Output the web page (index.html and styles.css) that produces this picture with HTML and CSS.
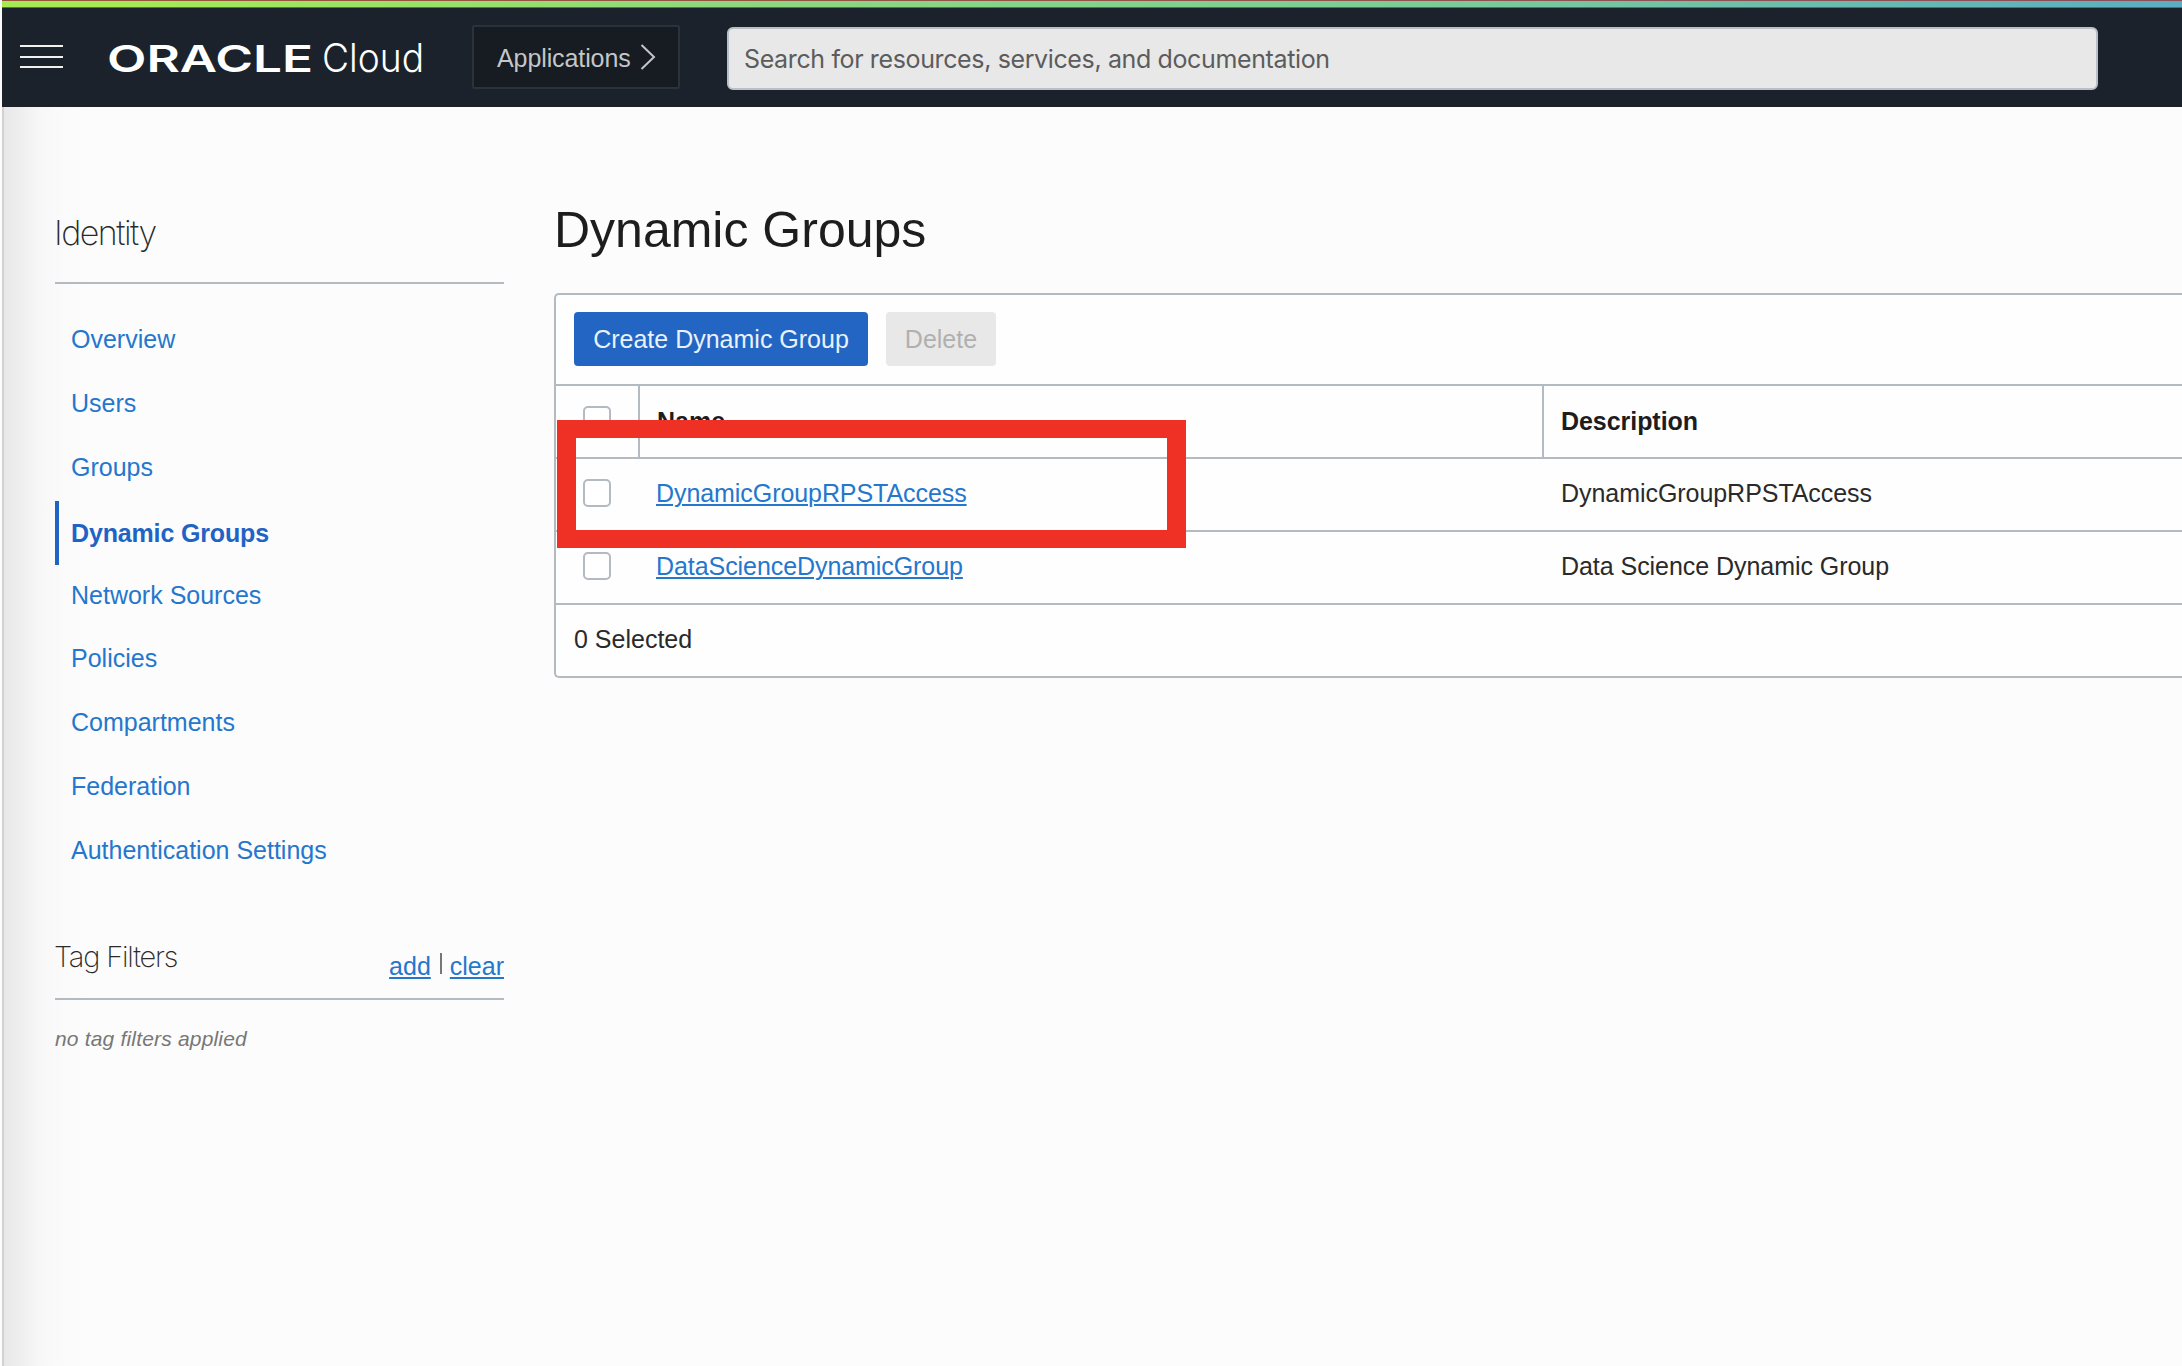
FILE: index.html
```html
<!DOCTYPE html>
<html lang="en">
<head>
<meta charset="utf-8">
<title>Dynamic Groups</title>
<link rel="stylesheet" href="styles.css">
</head>
<body>
<div class="page">
  <header class="topbar">
    <button class="menu" aria-label="Menu"><span></span><span></span><span></span></button>
    <svg class="logo" width="330" height="56" viewBox="0 0 330 56">
      <text class="logo-brand" x="0" y="38" textLength="206" lengthAdjust="spacingAndGlyphs">ORACLE</text>
      <text class="logo-cloud" x="215" y="38" textLength="102" lengthAdjust="spacingAndGlyphs">Cloud</text>
    </svg>
    <button class="apps"><span>Applications</span>
      <svg width="16" height="26" viewBox="0 0 16 26"><path d="M1.5 1 L14 13 L1.5 25" fill="none" stroke="#c4c6c8" stroke-width="2"/></svg>
    </button>
    <div class="search"><span>Search for resources, services, and documentation</span></div>
  </header>
  <div class="body">
    <aside class="sidebar">
      <h2 class="side-title">Identity</h2>
      <nav class="nav">
        <a>Overview</a>
        <a>Users</a>
        <a>Groups</a>
        <a class="active"><span>Dynamic Groups</span></a>
        <a>Network Sources</a>
        <a>Policies</a>
        <a>Compartments</a>
        <a>Federation</a>
        <a>Authentication Settings</a>
      </nav>
      <div class="filters">
        <h3>Tag Filters</h3>
        <div class="filter-links"><a>add</a><i></i><a>clear</a></div>
      </div>
      <p class="empty">no tag filters applied</p>
    </aside>
    <main class="main">
      <h1><span>Dynamic Groups</span></h1>
      <section class="panel">
        <div class="actions">
          <button class="btn primary">Create Dynamic Group</button>
          <button class="btn disabled">Delete</button>
        </div>
        <div class="row head">
          <div class="check"><span class="box"></span></div>
          <div class="name">Name</div>
          <div class="desc">Description</div>
        </div>
        <div class="row">
          <div class="check"><span class="box"></span></div>
          <div class="name"><a>DynamicGroupRPSTAccess</a></div>
          <div class="desc">DynamicGroupRPSTAccess</div>
        </div>
        <div class="row">
          <div class="check"><span class="box"></span></div>
          <div class="name"><a>DataScienceDynamicGroup</a></div>
          <div class="desc">Data Science Dynamic Group</div>
        </div>
        <div class="foot">0 Selected</div>
        <div class="highlight"></div>
      </section>
    </main>
  </div>
</div>
</body>
</html>
```

FILE: styles.css
```css
* { box-sizing: border-box; }
body {
  margin: 0;
  background: #fcfcfc;
  font-family: "Liberation Sans", Arial, sans-serif;
  font-size: 25px;
  color: #2a2a2a;
}
h1, h2, h3, p { margin: 0; font-weight: 400; }
button { font: inherit; border: 0; padding: 0; background: none; }

.page {
  height: 1366px;
  overflow: hidden;
  padding-left: 2px;
  display: flex;
  flex-direction: column;
}

.topbar {
  flex: none;
  height: 107px;
  background:
    linear-gradient(90deg, #96553a, #8a4f58) 0 0 / 100% 1px no-repeat,
    linear-gradient(90deg, #a3ea55 0%, #a3ea55 6%, #8ed97c 32%, #79cc98 66%, #5badc2 100%) 0 1px / 100% 6px no-repeat,
    linear-gradient(#4f7a45, #4f7a45) 0 7px / 100% 1px no-repeat,
    #1b222b;
  display: flex;
  align-items: flex-start;
}
.menu {
  width: 43px;
  margin: 45px 0 0 18px;
  display: flex;
  flex-direction: column;
  gap: 8.7px;
}
.menu span { height: 2px; background: #f0f0ec; }
.logo { margin: 34px 0 0 44px; width: 330px; height: 56px; flex: none; }
.logo-brand { font: 600 37px Inter, sans-serif; fill: #fff; }
.logo-cloud { font: 300 39px Inter, sans-serif; fill: #fff; }
.apps {
  flex: none;
  width: 208px;
  height: 64px;
  margin: 25px 0 0 35px;
  border: 2px solid #2b323a;
  border-radius: 2px;
  background: #161c22;
  color: #c4c6c8;
  display: flex;
  align-items: center;
  padding-left: 23px;
}
.apps span { width: 143px; text-align: left; letter-spacing: -0.1px; padding-top: 2px; }
.search {
  flex: none;
  width: 1371px;
  height: 63px;
  margin: 27px 0 0 47px;
  border: 2px solid #b7c0c7;
  border-radius: 6px;
  background: #e8e8e8;
  color: #5c5c5c;
  font: 25px/61px Inter, sans-serif;
  letter-spacing: -0.37px;
  padding-left: 15px;
}

.body {
  flex: 1;
  display: flex;
  border-left: 2px solid #d2d2d2;
  background: linear-gradient(90deg, #e8e8e8 0, #efefef 18px, #f7f7f7 36px, #fafafa 54px, #fcfcfc 82px);
}
.sidebar { width: 449px; margin-left: 51px; flex: none; }
.side-title {
  height: 177px;
  padding-top: 106px;
  border-bottom: 2px solid #b3bac1;
  font: 200 34px/40px Inter, sans-serif;
  letter-spacing: -1.5px;
  text-indent: -1px;
}
.nav { padding-top: 23px; display: flex; flex-direction: column; }
.nav a {
  height: 63.9px;
  line-height: 64px;
  padding-left: 16px;
  color: #2477cd;
}
.nav .active {
  margin: 2px 0 -2px;
  padding-left: 12px;
  border-left: 4px solid #1f63c4;
  font-weight: 700;
  letter-spacing: -0.15px;
  color: #1f63c4;
}
.filters {
  height: 117.5px;
  border-bottom: 2px solid #b3bac1;
  display: flex;
  justify-content: space-between;
}
.filters h3 {
  padding-top: 55px;
  font: 200 29px/40px Inter, sans-serif;
  letter-spacing: -1.2px;
  text-indent: -1px;
}
.filter-links { display: flex; padding-top: 69px; line-height: 30px; }
.filter-links i { width: 2px; height: 21px; background: #777; margin: 2px 8px 0 9px; }
.filter-links a, .name a {
  color: #2477cd;
  text-decoration: underline;
  text-decoration-thickness: 2px;
  text-underline-offset: 2px;
}
.empty {
  padding-top: 26px;
  font-size: 21px;
  line-height: 26px;
  font-style: italic;
  letter-spacing: 0.18px;
  color: #777;
}

.main { margin-left: 50px; flex: 1; min-width: 0; }
h1 { height: 186px; padding-top: 93px; font-size: 50px; line-height: 60px; color: #1d1d1d; }
.panel {
  position: relative;
  border: 2px solid #b3bac1;
  border-right: 0;
  border-radius: 5px 0 0 5px;
  background: #fefefe;
}
.actions {
  height: 91px;
  padding: 17px 0 0 18px;
  border-bottom: 2px solid #b3bac1;
  display: flex;
  gap: 18px;
}
.btn { height: 54px; border-radius: 4px; }
.primary { width: 294px; background: #2265c3; color: #e9f1fb; }
.disabled { width: 110px; background: #e8e8e8; color: #b0b0b0; }
.row { display: flex; height: 73px; border-bottom: 2px solid #b3bac1; line-height: 69px; }
.check { width: 84px; padding: 20px 0 0 27px; border-right: 2px solid transparent; }
.box {
  display: block;
  width: 28px;
  height: 28px;
  border: 2px solid #b3bac1;
  border-radius: 5px;
  background: #fff;
}
.name { width: 904px; padding-left: 16px; border-right: 2px solid transparent; }
.name a { letter-spacing: -0.07px; }
.desc { padding-left: 17px; letter-spacing: -0.05px; }
.head { font-weight: 700; color: #1d1d1d; line-height: 71px; }
.head .name, .head .desc { padding-left: 17px; }
.head .check, .head .name { border-right-color: #b3bac1; }
.foot { height: 71px; padding-left: 18px; line-height: 69px; }
.highlight {
  position: absolute;
  left: 1px;
  top: 125px;
  width: 629px;
  height: 128px;
  border: solid #ee3124;
  border-width: 18px 19px;
}
```
